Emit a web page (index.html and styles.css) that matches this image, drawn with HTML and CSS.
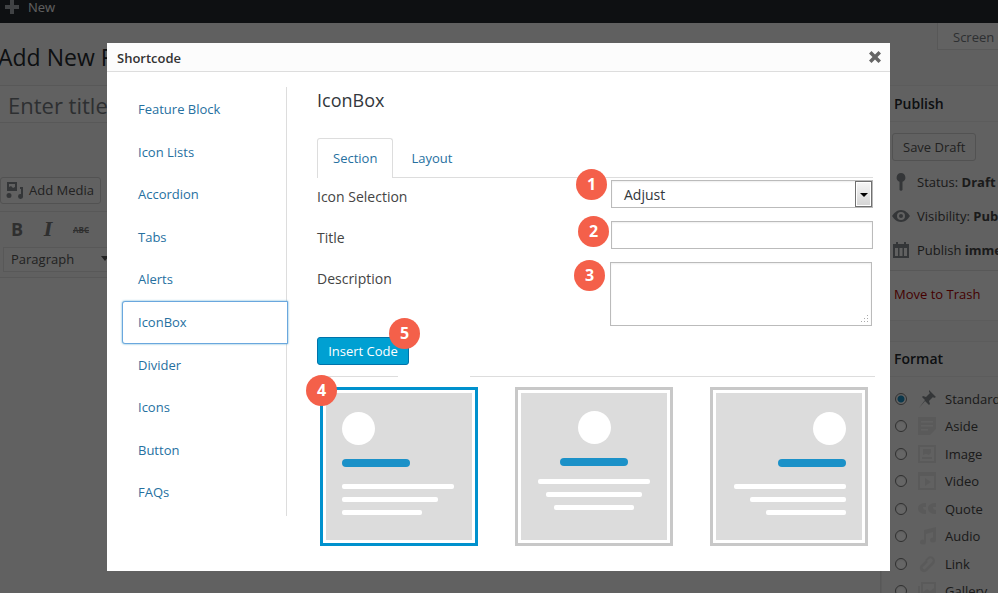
FILE: index.html
```html
<!DOCTYPE html>
<html lang="en">
<head>
    <meta charset="UTF-8">
    <title>Add New Post</title>
    <link rel="stylesheet" href="styles.css">
</head>
<body>
    <div class="adminbar">
        <svg class="adminbar-plus" viewBox="0 0 14 14"><path d="M5 0h4v5h5v4H9v5H5V9H0V5h5z"/></svg>
        <span>New</span>
    </div>

    <div class="screen-row"><div class="screen-tab">Screen Options</div></div>

    <div class="wp-body">
        <div class="main-col">
            <h1 class="page-title">Add New Post</h1>
            <div class="title-box">Enter title here</div>
            <div class="media-row">
                <div class="wp-btn media-btn">
                    <svg viewBox="0 0 18 18"><path d="M1 1h10v9H1zM3 3v3l2-1 2 2 2-1V3zM14 6h3v9a2.500 2.500 0 1 1-2-2V8h-1zM3 12a2.500 2.500 0 1 1 0 5 2.500 2.500 0 0 1 0-5z"/></svg>
                    Add Media
                </div>
            </div>
            <div class="editor">
                <div class="editor-tools">
                    <span class="tool-b">B</span>
                    <span class="tool-i">I</span>
                    <span class="tool-abc">ABC</span>
                </div>
                <div class="editor-tools">
                    <div class="format-select">Paragraph<i class="caret"></i></div>
                </div>
            </div>
        </div>

        <div class="side-col">
            <div class="postbox publish-box">
                <h2 class="postbox-title">Publish</h2>
                <div class="publish-inner">
                    <div class="wp-btn save-btn">Save Draft</div>
                    <div class="pub-line">
                        <svg viewBox="0 0 14 18"><path d="M7 0a4.500 4.500 0 0 1 1.500 8.700V17L7 18l-1.500-1V8.700A4.500 4.500 0 0 1 7 0z"/></svg>
                        <span>Status: <b>Draft</b> <u class="edit-link">Edit</u></span>
                    </div>
                    <div class="pub-line">
                        <svg viewBox="0 0 18 14"><path d="M9 1c4 0 7 3 9 6-2 3-5 6-9 6s-7-3-9-6c2-3 5-6 9-6zm0 2a4 4 0 1 0 0 8 4 4 0 0 0 0-8zm0 2a2 2 0 1 1 0 4 2 2 0 0 1 0-4z" fill-rule="evenodd"/></svg>
                        <span>Visibility: <b>Public</b></span>
                    </div>
                    <div class="pub-line">
                        <svg viewBox="-1 -1 18 18"><path d="M3 0h2v2h6V0h2v2h3v14H0V2h3zM2 6v8h3V6zm4.500 0v8h3V6zM11 6v8h3V6z" fill-rule="evenodd"/></svg>
                        <span>Publish <b>immediately</b></span>
                    </div>
                </div>
                <div class="publish-foot"><span class="trash">Move to Trash</span></div>
            </div>

            <div class="postbox format-box">
                <h2 class="postbox-title">Format</h2>
                <ul class="format-list">
                    <li><i class="radio on"></i><svg viewBox="0 0 18 18"><path d="M11 0l7 7-2 1-1-1-4 4 1 3-1 1-4-4-6 7 6-8-3-3 1-1 3 1 4-4-1-1z"/></svg>Standard</li>
                    <li><i class="radio"></i><svg viewBox="0 0 18 18"><path d="M0 0h18v12l-6 6H0zM3 4v1.500h12V4zm0 4v1.500h12V8zm0 4v1.500h7V12z" fill-rule="evenodd"/></svg>Aside</li>
                    <li><i class="radio"></i><svg viewBox="0 0 18 18"><path d="M0 0h18v18H0zM2 2v14h14V2zm3 2h8v4l-2 2-3-1-3 1zm-1 8h10v2H4z" fill-rule="evenodd"/></svg>Image</li>
                    <li><i class="radio"></i><svg viewBox="0 0 18 18"><path d="M0 0h18v18H0zM2 4v12h14V4zm5 2l6 4-6 4z" fill-rule="evenodd"/></svg>Video</li>
                    <li><i class="radio"></i><svg viewBox="0 0 18 18"><path d="M8 3v4H5c0 2 1 3 3 3v4c-5 0-8-2-8-6 0-3 3-5 8-5zm10 0v4h-3c0 2 1 3 3 3v4c-5 0-8-2-8-6 0-3 3-5 8-5z"/></svg>Quote</li>
                    <li><i class="radio"></i><svg viewBox="0 0 18 18"><path d="M6 3l12-3v13a3 2.500 0 1 1-3-2.500V5L8 7v8a3 2.500 0 1 1-2-2.300z"/></svg>Audio</li>
                    <li><i class="radio"></i><svg viewBox="0 0 18 18"><path d="M12 1a5 5 0 0 1 4 8l-7 7a4 4 0 0 1-6-6l5-5 2 2-5 5a1.500 1.500 0 0 0 2 2l7-7a2 2 0 0 0-3-3l-2 2-2-1 3-3z"/></svg>Link</li>
                    <li><i class="radio"></i><svg viewBox="0 0 18 18"><path d="M3 0h15v14H3zM5 2v8l4-3 3 2 4-3V2zM0 4h2v12h13v2H0z" fill-rule="evenodd"/></svg>Gallery</li>
                </ul>
            </div>
        </div>
    </div>

    <div class="overlay"></div>

    <div class="modal">
        <header class="modal-head">
            <span class="modal-title">Shortcode</span>
            <svg class="modal-close" viewBox="0 0 12 12"><path d="M2.500 0L6 3.500 9.500 0 12 2.500 8.500 6 12 9.500 9.500 12 6 8.500 2.500 12 0 9.500 3.500 6 0 2.500z"/></svg>
        </header>

        <div class="modal-body">
            <nav class="sc-nav">
                <a>Feature Block</a>
                <a>Icon Lists</a>
                <a>Accordion</a>
                <a>Tabs</a>
                <a>Alerts</a>
                <a class="active">IconBox</a>
                <a>Divider</a>
                <a>Icons</a>
                <a>Button</a>
                <a>FAQs</a>
            </nav>

            <div class="sc-content">
                <h2 class="sc-title">IconBox</h2>

                <div class="tabs">
                    <a class="tab active">Section</a>
                    <a class="tab">Layout</a>
                </div>

                <div class="fields">
                    <label>Icon Selection</label>
                    <div class="select-box">Adjust<span class="select-arrow"><i></i></span></div>
                    <label>Title</label>
                    <input type="text" class="text-field">
                    <label>Description</label>
                    <div class="area-wrap">
                        <textarea class="area-field"></textarea>
                        <svg class="area-grip" viewBox="0 0 9 9"><path d="M7 0h1v1H7zM7 3h1v1H7zM4 3h1v1H4zM7 6h1v1H7zM4 6h1v1H4zM1 6h1v1H1z"/></svg>
                    </div>
                </div>

                <button class="insert-btn">Insert Code</button>

                <div class="split-rule"><span></span><span></span></div>

                <div class="layouts">
                    <div class="layout-card selected">
                        <div class="mock mock-left">
                            <i class="mock-circle"></i><i class="mock-bar"></i>
                            <i class="mock-line l1"></i><i class="mock-line l2"></i><i class="mock-line l3"></i>
                        </div>
                    </div>
                    <div class="layout-card">
                        <div class="mock mock-center">
                            <i class="mock-circle"></i><i class="mock-bar"></i>
                            <i class="mock-line l1"></i><i class="mock-line l2"></i><i class="mock-line l3"></i>
                        </div>
                    </div>
                    <div class="layout-card">
                        <div class="mock mock-right">
                            <i class="mock-circle"></i><i class="mock-bar"></i>
                            <i class="mock-line l1"></i><i class="mock-line l2"></i><i class="mock-line l3"></i>
                        </div>
                    </div>
                </div>
            </div>
        </div>

        <span class="badge b1">1</span>
        <span class="badge b2">2</span>
        <span class="badge b3">3</span>
        <span class="badge b4">4</span>
        <span class="badge b5">5</span>
    </div>
</body>
</html>
```

FILE: styles.css
```css
* {
    box-sizing: border-box;
}

html, body {
    height: 593px;
    overflow: hidden;
}

body {
    margin: 0;
    position: relative;
    font-family: "Open Sans", "Noto Sans", sans-serif;
    font-size: 13px;
    color: #444;
    background-color: #f1f1f1;
}

/* page behind the dialog */
.adminbar {
    height: 23px;
    background-color: #23282d;
    color: #eee;
    display: flex;
    align-items: flex-start;
    padding-left: 5px;
    gap: 9px;
    line-height: 14px;
}

.adminbar-plus {
    width: 14px;
    height: 14px;
    fill: #a0a5aa;
}

.screen-row {
    display: flex;
    justify-content: flex-end;
    height: 0;
}

.screen-tab {
    margin-right: -80px;
    width: 141px;
    height: 27px;
    padding: 4px 0 0 15px;
    line-height: 20px;
    white-space: nowrap;
    color: #72777c;
    background-color: #f4f4f4;
    border: 1px solid #ddd;
    border-top: none;
}

.wp-body {
    display: flex;
}

.main-col {
    width: 881px;
    flex: none;
}

.page-title {
    margin: 18px 0 0 -2px;
    font-size: 23px;
    font-weight: 400;
    line-height: 32px;
    color: #23282d;
    white-space: nowrap;
}

.title-box {
    margin-top: 12px;
    height: 38px;
    padding-left: 8px;
    font-size: 22px;
    line-height: 38px;
    color: #72777c;
    background-color: #f2f2f2;
    border: 1px solid #ddd;
    border-left: none;
}

.media-row {
    margin-top: 54px;
    height: 34px;
}

.wp-btn {
    display: inline-flex;
    align-items: center;
    color: #555;
    background-color: #f2f2f2;
    border: 1px solid #ccc;
    border-radius: 3px;
}

.media-btn {
    width: 101px;
    height: 27px;
    padding: 0 0 2px 5px;
    gap: 5px;
}

.media-btn svg {
    width: 18px;
    height: 18px;
    fill: #82878c;
}

.editor {
    height: 400px;
    background-color: #f2f2f2;
    border: 1px solid #ddd;
    border-left: none;
}

.editor-tools {
    display: flex;
    align-items: center;
    height: 34px;
    padding-left: 11px;
    color: #555;
    background-color: #efefef;
}

.editor-tools + .editor-tools {
    height: 32px;
    padding-left: 3px;
    border-bottom: 1px solid #ddd;
}

.tool-b {
    font-weight: 700;
    font-size: 18px;
    width: 33px;
    color: #777;
}

.tool-i {
    font-weight: 700;
    font-style: italic;
    font-size: 18px;
    width: 29px;
    color: #777;
    font-family: "DejaVu Serif", serif;
}

.tool-abc {
    font-size: 8px;
    font-weight: 700;
    color: #777;
    text-decoration: line-through;
}

.format-select {
    display: flex;
    align-items: center;
    justify-content: space-between;
    width: 107px;
    height: 25px;
    margin-top: -5px;
    padding: 0 0 1px 7px;
    background-color: #f2f2f2;
    border: 1px solid #ddd;
}

.caret {
    border-left: 4px solid transparent;
    border-right: 4px solid transparent;
    border-top: 5px solid #555;
}

.side-col {
    flex: none;
    width: 400px;
    padding-top: 62px;
}

.postbox {
    background-color: #f2f2f2;
    border: 1px solid #e5e5e5;
}

.publish-box {
    height: 236px;
}

.postbox-title {
    margin: 0;
    height: 36px;
    padding: 8px 0 0 12px;
    font-size: 14px;
    font-weight: 600;
    line-height: 20px;
    color: #23282d;
    border-bottom: 1px solid #e5e5e5;
}

.publish-inner {
    padding: 11px 0 0 10px;
    height: 148px;
}

.save-btn {
    width: 84px;
    height: 28px;
    padding-left: 10px;
}

.pub-line {
    display: flex;
    align-items: center;
    height: 34px;
    white-space: nowrap;
    gap: 7px;
}

.pub-line:nth-child(2) {
    margin-top: 4px;
}

.pub-line svg {
    width: 18px;
    height: 18px;
    flex: none;
    fill: #82878c;
}

.edit-link {
    color: #0073aa;
}

.publish-foot {
    height: 50px;
    padding: 13px 0 0 12px;
    line-height: 20px;
    background-color: #f5f5f5;
    border-top: 1px solid #ddd;
}

.trash {
    color: #a00;
}

.format-box {
    margin-top: 20px;
}

.format-box .postbox-title {
    height: 35px;
    padding-top: 7px;
}

.format-list {
    list-style: none;
    margin: 0;
    padding: 8px 0 0 13px;
}

.format-list li {
    display: flex;
    align-items: center;
    height: 27.5px;
    white-space: nowrap;
    color: #444;
}

.format-list svg {
    width: 18px;
    height: 18px;
    flex: none;
    margin: 0 9px 0 11px;
    fill: #e2e2e2;
}

.format-list li:first-child svg {
    fill: #82878c;
}

.radio {
    width: 12px;
    height: 12px;
    flex: none;
    border-radius: 50%;
    background-color: #fff;
    border: 1px solid #777;
    box-shadow: inset 0 1px 2px rgba(0, 0, 0, 0.1);
}

.radio.on {
    background: radial-gradient(circle, #1e8cbe 3px, #fff 4px);
}

.overlay {
    position: absolute;
    inset: 0;
    background-color: rgba(0, 0, 0, 0.6);
}

/* shortcode dialog */
.modal {
    position: absolute;
    left: 107px;
    top: 43px;
    width: 783px;
    height: 528px;
    background-color: #fff;
}

.modal-head {
    display: flex;
    align-items: center;
    justify-content: space-between;
    height: 29px;
    padding: 2px 9px 0 10px;
    background-color: #fcfcfc;
    border-bottom: 1px solid #ddd;
}

.modal-title {
    font-weight: 600;
    color: #333;
    line-height: 26px;
}

.modal-close {
    width: 12px;
    height: 12px;
    fill: #666;
    margin-top: -2px;
}

.modal-body {
    display: flex;
    padding: 15px 0 0 15px;
}

.sc-nav {
    flex: none;
    width: 165px;
    height: 429px;
    padding-top: 1px;
    border-right: 1px solid #ddd;
}

.sc-nav a {
    display: block;
    height: 42.6px;
    padding-left: 16px;
    line-height: 42.6px;
    color: #26709f;
}

.sc-nav a.active {
    width: 166px;
    line-height: 40px;
    padding-left: 15px;
    background-color: #fff;
    border: 1px solid #6aa7de;
    border-radius: 3px 0 0 3px;
    box-shadow: 0 0 2px rgba(30, 140, 190, 0.8);
}

.sc-content {
    width: 558px;
    margin-left: 30px;
}

.sc-title {
    margin: 0;
    height: 51px;
    padding-top: 1px;
    font-size: 18px;
    font-weight: 400;
    line-height: 25px;
    color: #32373c;
}

.tabs {
    display: flex;
    width: 556px;
    height: 40px;
    border-bottom: 1px solid #ddd;
}

.tab {
    height: 40px;
    padding: 0 18px;
    line-height: 40px;
    color: #26709f;
}

.tab.active {
    padding: 0 15px;
    line-height: 39px;
    background-color: #fff;
    border: 1px solid #ddd;
    border-bottom: none;
    border-radius: 3px 3px 0 0;
}

.fields {
    display: grid;
    grid-template-columns: 294px 262px;
    grid-auto-rows: auto;
    row-gap: 13px;
    margin-top: 2px;
}

.fields label {
    padding-top: 7px;
    font-size: 14px;
    line-height: 20px;
    color: #444;
}

.select-box {
    position: relative;
    height: 28px;
    padding-left: 12px;
    font-size: 14px;
    line-height: 28px;
    color: #32373c;
    border: 1px solid #bbb;
    box-shadow: inset 0 1px 2px rgba(0, 0, 0, 0.07);
}

.select-arrow {
    position: absolute;
    right: 0;
    top: 0;
    width: 17px;
    height: 26px;
    display: flex;
    justify-content: center;
    padding-top: 11px;
    background: linear-gradient(#f6f6f6, #d4d4d4);
    border: 1px solid #707070;
    box-shadow: inset 0 0 0 1px #fff;
}

.select-arrow i {
    border-left: 4px solid transparent;
    border-right: 4px solid transparent;
    border-top: 4px solid #000;
    height: 0;
}

.text-field {
    display: block;
    width: 262px;
    height: 28px;
    margin: 0;
    border: 1px solid #bbb;
    box-shadow: inset 0 1px 2px rgba(0, 0, 0, 0.07);
}

.area-wrap {
    position: relative;
    width: 262px;
    height: 64px;
    margin-left: -1px;
}

.area-field {
    display: block;
    width: 262px;
    height: 64px;
    margin: 0;
    resize: none;
    border: 1px solid #bbb;
    box-shadow: inset 0 1px 2px rgba(0, 0, 0, 0.07);
}

.area-grip {
    position: absolute;
    right: 3px;
    bottom: 2px;
    width: 9px;
    height: 9px;
    fill: #aaa;
}

.insert-btn {
    display: block;
    width: 92px;
    height: 28px;
    margin-top: 11px;
    padding: 0 0 1px;
    font-family: inherit;
    font-size: 13px;
    color: #fff;
    background-color: #00a0d2;
    border: 1px solid #0073aa;
    border-radius: 3px;
}

.split-rule {
    display: flex;
    justify-content: space-between;
    margin-top: 11px;
}

.split-rule span {
    height: 1px;
    background-color: #ddd;
    width: 81px;
}

.split-rule span:last-child {
    width: 405px;
}

.layouts {
    display: flex;
    gap: 37px;
    margin: 10px 0 0 3px;
}

.layout-card {
    width: 158px;
    height: 159px;
    padding: 3px;
    border: 3px solid #c8c8c8;
}

.layout-card.selected {
    border-color: #0091cd;
}

.mock {
    display: flex;
    flex-direction: column;
    height: 147px;
    padding: 19px 16px 0;
    background-color: #dcdcdc;
}

.mock i {
    display: block;
    background-color: #fff;
}

.mock-left {
    align-items: flex-start;
}

.mock-center {
    align-items: center;
    padding-top: 18px;
}

.mock-center .mock-bar {
    margin-top: 12px;
}

.mock-right {
    align-items: flex-end;
}

.mock .mock-circle {
    width: 33px;
    height: 33px;
    flex: none;
    border-radius: 50%;
}

.mock .mock-bar {
    width: 68px;
    height: 8px;
    flex: none;
    margin-top: 14px;
    border-radius: 4px;
    background-color: #1b91c8;
}

.mock .mock-line {
    height: 5px;
    flex: none;
    margin-top: 8px;
    border-radius: 2px;
}

.mock .mock-bar + .mock-line {
    margin-top: 17px;
}

.mock-center .mock-bar + .mock-line {
    margin-top: 13px;
}

.mock .l1 {
    width: 112px;
}

.mock .l2 {
    width: 96px;
}

.mock .l3 {
    width: 80px;
}

/* numbered callouts drawn on the screenshot */
.badge {
    position: absolute;
    width: 31px;
    height: 31px;
    border-radius: 50%;
    background-color: #f4604a;
    color: #fff;
    font-size: 16px;
    font-weight: 700;
    line-height: 31px;
    text-align: center;
}

.b1 {
    left: 469px;
    top: 126px;
}

.b2 {
    left: 471px;
    top: 173px;
}

.b3 {
    left: 467px;
    top: 217px;
}

.b4 {
    left: 199px;
    top: 332px;
}

.b5 {
    left: 282px;
    top: 275px;
}
```
